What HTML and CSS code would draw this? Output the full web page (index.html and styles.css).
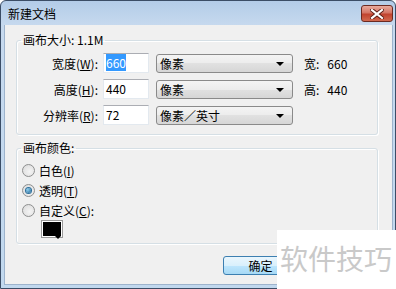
FILE: index.html
```html
<!DOCTYPE html>
<html lang="zh-CN">
<head>
    <meta charset="UTF-8">
    <title>新建文档</title>
    <link rel="stylesheet" href="styles.css">
</head>
<body>
    <div class="window">
        <div class="titlebar">
            <span class="title">新建文档</span>
            <div class="close">
                <svg width="14" height="10" viewBox="0 0 14 10">
                    <path d="M2 1 L12 9 M12 1 L2 9" stroke="#5a1d16" stroke-width="4" stroke-linecap="square"/>
                    <path d="M2 1 L12 9 M12 1 L2 9" stroke="#fff" stroke-width="2.2" stroke-linecap="square"/>
                </svg>
            </div>
        </div>
        <div class="client">
            <fieldset class="group size">
                <legend>画布大小: 1.1M</legend>
                <div class="row">
                    <label>宽度(<u>W</u>):</label>
                    <div class="field"><span class="sel">660</span></div>
                    <div class="combo">像素</div>
                    <span class="info">宽:<span class="num">660</span></span>
                </div>
                <div class="row">
                    <label>高度(<u>H</u>):</label>
                    <div class="field">440</div>
                    <div class="combo">像素</div>
                    <span class="info">高:<span class="num">440</span></span>
                </div>
                <div class="row">
                    <label>分辨率(<u>R</u>):</label>
                    <div class="field">72</div>
                    <div class="combo">像素／英寸</div>
                </div>
            </fieldset>

            <fieldset class="group color">
                <legend>画布颜色:</legend>
                <div class="radio-row"><span class="radio"></span>白色(<u>I</u>)</div>
                <div class="radio-row"><span class="radio checked"></span>透明(<u>T</u>)</div>
                <div class="radio-row"><span class="radio"></span>自定义(<u>C</u>):</div>
                <div class="swatch"><span class="fill"></span></div>
            </fieldset>

            <div class="buttons">
                <div class="btn default">确定</div>
                <div class="btn"></div>
            </div>
        </div>
        <div class="watermark">软件技巧</div>
    </div>
</body>
</html>
```

FILE: styles.css
```css
body {
    margin: 0;
    background: #ffffff;
    font-family: "Noto Sans CJK SC", "DejaVu Sans", sans-serif;
    font-size: 12px;
    color: #000;
}
.window {
    position: relative;
    width: 396px;
    height: 289px;
    box-sizing: border-box;
    border: 1px solid #3b4d66;
    border-radius: 6px 6px 0 0;
    background: linear-gradient(#b3cce8, #c6d9ee 24px, #c1d8ee);
    padding: 0 2px 3px 3px;
    display: flex;
    flex-direction: column;
}
.titlebar {
    height: 24px;
    display: flex;
    justify-content: space-between;
    align-items: flex-start;
    flex-shrink: 0;
}
.title {
    margin: 5px 0 0 4px;
    line-height: 16px;
}
.close {
    margin-top: 4px;
    width: 32px;
    height: 17px;
    box-sizing: border-box;
    border: 1px solid #6b2a22;
    border-radius: 3px;
    background: linear-gradient(#e8aa9e, #d47565 45%, #c1432f 55%, #d2694f);
    display: flex;
    align-items: center;
    justify-content: center;
}
.client {
    flex: 1;
    background: #f0f0f0;
    padding: 8px 0 0 12px;
    box-shadow: inset 1px 0 0 #9db3cc, inset -1px 0 0 #9db3cc, inset 0 -1px 0 #9db3cc;
}
.group {
    margin: 0;
    width: 362px;
    box-sizing: border-box;
    border: 1px solid #d5dfe5;
    border-radius: 3px;
    box-shadow: 1px 1px 0 #fff, inset 1px 1px 0 #fff;
}
.group legend {
    padding: 0 2px;
    line-height: 14px;
}
.size {
    padding: 6px 0 9px 4px;
}
.row {
    display: flex;
    align-items: center;
    height: 20px;
    margin-bottom: 6px;
}
.row:last-child {
    margin-bottom: 0;
}
.row label {
    width: 77px;
    margin-right: 5px;
    text-align: right;
    white-space: nowrap;
}
.field {
    width: 46px;
    height: 20px;
    box-sizing: border-box;
    border: 1px solid #e3e9ef;
    border-top-color: #abadb3;
    background: #fff;
    padding-left: 2px;
    margin-right: 7px;
    line-height: 18px;
}
.sel {
    background: #3399ff;
    color: #fff;
}
.combo {
    position: relative;
    width: 137px;
    height: 19px;
    box-sizing: border-box;
    border: 1px solid #8a8a8a;
    border-radius: 3px;
    background: linear-gradient(#f4f4f4, #ececec 50%, #e1e1e1 50%, #d6d6d6);
    padding-left: 3px;
    line-height: 17px;
    margin-right: 11px;
}
.combo::after {
    content: "";
    position: absolute;
    right: 8px;
    top: 7px;
    border-left: 4px solid transparent;
    border-right: 4px solid transparent;
    border-top: 4px solid #000;
}
.info .num {
    margin-left: 8px;
}
.color {
    margin-top: 6px;
    padding: 5px 0 5px 4px;
}
.radio-row {
    display: flex;
    align-items: center;
    height: 20px;
    padding-left: 1px;
}
.radio {
    width: 13px;
    height: 13px;
    box-sizing: border-box;
    border: 1px solid #8e8f8f;
    border-radius: 50%;
    background: radial-gradient(circle at 60% 60%, #f4f4f4, #d9d9d9);
    margin-right: 4px;
    display: flex;
    align-items: center;
    justify-content: center;
}
.radio.checked::after {
    content: "";
    width: 5px;
    height: 5px;
    border-radius: 50%;
    background: radial-gradient(circle at 35% 35%, #8ed0f0, #1b5f8f);
    box-shadow: 0 0 0 1px #2c6f9c;
}
.swatch {
    position: relative;
    width: 22px;
    height: 18px;
    box-sizing: border-box;
    margin-left: 20px;
    border: 1px solid #9a9a9a;
    background: #fff;
    padding: 1px;
}
.swatch .fill {
    display: block;
    height: 100%;
    background: #000;
}
.swatch::after {
    content: "";
    position: absolute;
    right: 1px;
    bottom: -2px;
    border-left: 3px solid transparent;
    border-right: 3px solid transparent;
    border-top: 3px solid #000;
}
.buttons {
    display: flex;
    justify-content: flex-end;
    gap: 6px;
    margin-top: 12px;
    padding-right: 14px;
}
.btn {
    width: 75px;
    height: 19px;
    box-sizing: border-box;
    border: 1px solid #707070;
    border-radius: 3px;
    background: linear-gradient(#f2f2f2, #ebebeb 50%, #dddddd 50%, #cfcfcf);
    text-align: center;
    line-height: 17px;
}
.btn.default {
    border-color: #3c7fb1;
    background: linear-gradient(#eaf6fd, #d9f0fc 50%, #bee6fd 50%, #a7d9f5);
}
.watermark {
    position: absolute;
    left: 276px;
    top: 229px;
    right: -1px;
    bottom: -1px;
    background: #fff;
    color: #c9c9c9;
    font-size: 28px;
    line-height: 56px;
    padding-left: 3px;
    white-space: nowrap;
}
```
